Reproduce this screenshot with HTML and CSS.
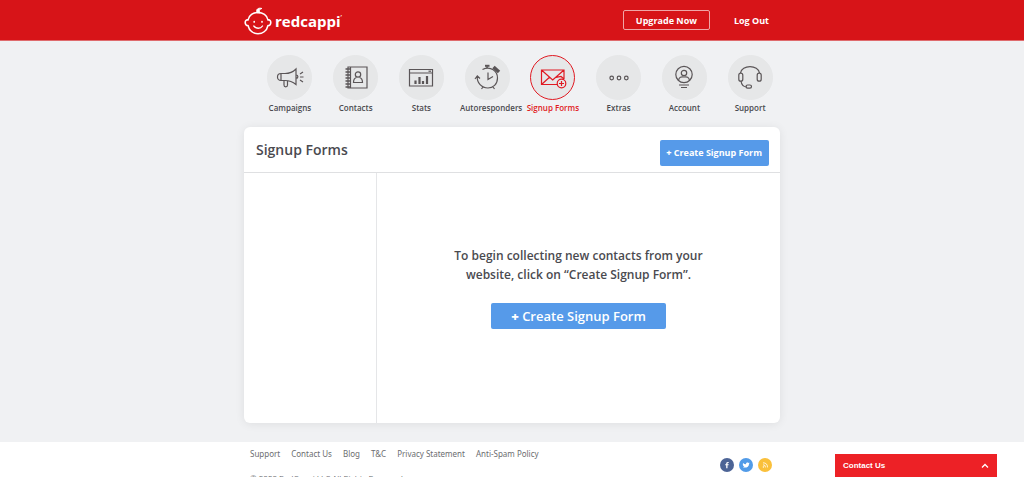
FILE: index.html
```html
<!DOCTYPE html>
<html lang="en">
<head>
<meta charset="utf-8">
<title>Signup Forms - redcappi</title>
<link rel="stylesheet" href="styles.css">
</head>
<body>
<header class="topbar">
  <div class="container topbar-inner">
    <a class="brand" href="#">
      <svg class="brand-mark" viewBox="0 0 28 28" fill="none" stroke="#fff" stroke-width="1.6" stroke-linecap="round" aria-hidden="true">
        <path d="M4 13C5.500 3 22.500 3 24 13M4 18.500C6.500 29.500 21.500 29.500 24 18.500M4 13C.3 12 .3 18.800 4 18.500M24 13C27.700 12 27.700 18.800 24 18.500"/>
        <path d="M13 5.500C11.500 2 14.500 .5 18 1.500C15.800 2 14.500 3.300 16 5.500Z" fill="#fff" stroke-width="1"/>
        <path d="M9.800 19C12 22 16.500 22 18.500 19" stroke-width="1.300"/>
        <path d="M10.200 14.700v.3M18 14.700v.3" stroke-width="1.700"/>
      </svg>
      <span class="brand-name">redcappi</span><span class="brand-tm">’</span>
    </a>
    <div class="account-links">
      <button class="upgrade" type="button">Upgrade Now</button>
      <a class="logout" href="#">Log Out</a>
    </div>
  </div>
</header>

<main class="main">
  <div class="container">
    <nav class="nav">
      <a class="nav-item" href="#">
        <span class="nav-icon"><svg viewBox="0 0 28 28"><path d="M5 9.500H9C13 9.500 17 8 20 5V20.500C17 18 13 16.500 9 16.500H5C.3 16.500.3 9.500 5 9.500ZM5 9.500V16.500M20 11C22.500 11 22.500 14.500 20 14.500M8 16.500V21C8 23.500 11.500 23.500 11.500 21V16.500M24 10L27 8M24 13H27.500M24 16L27 18"/></svg></span>
        <span>Campaigns</span>
      </a>
      <a class="nav-item" href="#">
        <span class="nav-icon"><svg viewBox="0 0 28 28"><path d="M6 3H25V24H6ZM8.500 3V24"/><path d="M3.500 5H8M3.500 8H8M3.500 11H8M3.500 14H8M3.500 17H8M3.500 20H8M3.500 23H8" stroke-width="1.400"/><circle cx="16" cy="10.500" r="2.700"/><path d="M14.500 13.500C12.500 14 11.500 15.500 11.500 18.500H20.500C20.500 15.500 19.500 14 17.500 13.500"/></svg></span>
        <span>Contacts</span>
      </a>
      <a class="nav-item" href="#">
        <span class="nav-icon"><svg viewBox="0 0 28 28"><path d="M2.500 5.500H25.500V22H2.500ZM2.500 9H25.500"/><path d="M8.500 20V16.500M12.500 20V13M16 20V17M20 20V12" stroke-width="2.200"/><path d="M21.500 7.200h2.500"/></svg></span>
        <span>Stats</span>
      </a>
      <a class="nav-item" href="#">
        <span class="nav-icon"><svg viewBox="0 0 28 28"><path d="M9.500 5.500C18 1.500 24.500 7.500 24.500 14C24.500 20.500 20 24 15 24C8.500 24 4 19 4.200 12.500M2 15L4.300 12L7 14.500M15 8.500V15.500L20 12.500M10 23L8.500 25M20 23L21.500 25M14 2V4.500"/><path d="M12 1.800H16.500" stroke-width="2"/><path d="M20.500 3L26 8" stroke-width="3.500"/></svg></span>
        <span class="nav-long">Autoresponders</span>
      </a>
      <a class="nav-item nav-active" href="#">
        <span class="nav-icon"><svg viewBox="0 0 28 28"><path d="M18.500 20.500H2.500V6H25V15M2.500 6L13.700 16L25 6M2.500 20.500L10.500 13.300M25 15L22 12.500L17 13.300"/><circle cx="22.500" cy="19.500" r="4.300"/><path d="M20 19.500H25M22.500 17V22"/></svg></span>
        <span>Signup Forms</span>
      </a>
      <a class="nav-item" href="#">
        <span class="nav-icon"><svg viewBox="0 0 28 28"><circle cx="6.700" cy="14" r="1.800"/><circle cx="14" cy="14" r="1.800"/><circle cx="21.300" cy="14" r="1.800"/></svg></span>
        <span>Extras</span>
      </a>
      <a class="nav-item" href="#">
        <span class="nav-icon"><svg viewBox="0 0 28 28"><circle cx="14" cy="10.500" r="8.200"/><circle cx="14" cy="9" r="2.700"/><path d="M8.500 16.500C9 13 11 12.500 14 13C17 12.500 19 13 19.500 16.500M9 21H19M11 23.500H17"/></svg></span>
        <span>Account</span>
      </a>
      <a class="nav-item" href="#">
        <span class="nav-icon"><svg viewBox="0 0 28 28"><path d="M4.500 9C5.500 .5 22.500 .5 23.500 9M5 17C5.500 21 7.500 23 11 23"/><rect x="2.800" y="9.200" width="4" height="8" rx="2"/><rect x="21.200" y="9.200" width="4" height="8" rx="2"/><rect x="10" y="21" width="5.500" height="3.200" rx="1.600"/></svg></span>
        <span>Support</span>
      </a>
    </nav>

    <section class="card">
      <div class="card-head">
        <h1 class="card-title">Signup Forms</h1>
        <button class="btn btn-small" type="button"><b>+</b> Create Signup Form</button>
      </div>
      <div class="card-body">
        <aside class="side"></aside>
        <div class="empty">
          <p class="empty-text">To begin collecting new contacts from your website, click on “Create Signup Form”.</p>
          <button class="btn btn-large" type="button"><b>+</b> Create Signup Form</button>
        </div>
      </div>
    </section>
  </div>
</main>

<footer class="footer">
  <div class="container footer-inner">
    <div>
      <nav class="footer-links">
        <a href="#">Support</a><a href="#">Contact Us</a><a href="#">Blog</a><a href="#">T&amp;C</a><a href="#">Privacy Statement</a><a href="#">Anti-Spam Policy</a>
      </nav>
      <p class="copyright">© 2020 RedCappi LLC All Rights Reserved.</p>
    </div>
    <div class="social">
      <a class="social-link facebook" href="#" aria-label="Facebook"><svg viewBox="0 0 14 14"><path d="M6.200 10.200V7.300H5.200V6.200H6.200C6 4.300 6.900 3.700 8.700 4V5.100C7.800 5 7.500 5.300 7.500 6.200H8.700L8.500 7.300H7.500V10.200Z" fill="#fff"/></svg></a>
      <a class="social-link twitter" href="#" aria-label="Twitter"><svg viewBox="0 0 14 14"><path d="M4 5Q5.400 6.200 7 6.200C6.800 4.500 8.700 4 9.600 4.900L10.600 4.700L10.100 5.700C10 9 6.800 10.300 3.800 9.200Q4.900 9.100 5.400 8.700Q4.400 8.400 4.100 7.500Q3.600 6.500 4 5Z" fill="#fff"/></svg></a>
      <a class="social-link rss" href="#" aria-label="RSS"><svg viewBox="0 0 14 14" fill="none" stroke="#fff" stroke-width=".8"><circle cx="5.300" cy="9" r=".4"/><path d="M5 6.800Q7.500 6.800 7.500 9.400M5 4.800Q9.500 4.800 9.500 9.400"/></svg></a>
    </div>
  </div>
</footer>

<button class="chat" type="button">
  <span>Contact Us</span>
  <svg class="chat-arrow" viewBox="0 0 8 6" fill="none" stroke="#fff" stroke-width="1.300"><path d="M1 4.500L4 1.500L7 4.500"/></svg>
</button>
</body>
</html>
```
FILE: styles.css
```css
* { box-sizing: border-box; }
html { height: 100%; }
body {
  margin: 0;
  height: 100%;
  overflow: hidden;
  background: #fff;
  color: #4a4a4f;
  font-family: "Open Sans", sans-serif;
}
a { color: inherit; text-decoration: none; }
button { font-family: inherit; cursor: pointer; }
.container { max-width: 536px; margin: 0 auto; }

.topbar { background: #d71418; border-bottom: 1px solid #df6b6d; color: #fff; }
.topbar-inner { display: flex; align-items: center; justify-content: space-between; height: 40px; }
.brand { display: flex; align-items: center; padding-top: 2px; }
.brand-mark { width: 28px; height: 28px; margin-right: 3px; }
.brand-name { font: 700 15px/24px "Open Sans", sans-serif; }
.brand-tm { font-size: 8px; line-height: 20px; align-self: flex-start; }
.account-links { display: flex; align-items: center; gap: 24px; padding-right: 11px; font-size: 9px; font-weight: 700; }
.upgrade { height: 20px; padding: 0 12px; border: 1px solid #f0a5a6; border-radius: 2px; background: none; color: #fff; font-size: 9px; font-weight: 700; }

.main { background: #f0f1f3; padding: 14px 0 19px; }
.nav { display: grid; grid-template-columns: repeat(8, minmax(0, 1fr)); margin: 0 -3px 12px 13px; }
.nav-item { display: flex; flex-direction: column; align-items: center; gap: 1px; font-size: 8px; font-weight: 600; line-height: 14px; white-space: nowrap; }
.nav-icon { display: flex; align-items: center; justify-content: center; width: 45px; height: 45px; border: 1px solid #e6e7e8; border-radius: 50%; background: #e6e7e8; }
.nav-icon svg { width: 28px; height: 28px; fill: none; stroke: #5a5557; stroke-width: 1.2; }
.nav-long { padding-left: 8px; }
.nav-active { color: #e01a22; }
.nav-active .nav-icon { border-color: #e01a22; }
.nav-active .nav-icon svg { stroke: #e01a22; }

.card { background: #fff; border-radius: 6px; box-shadow: 0 1px 10px rgba(0, 0, 0, 0.08); }
.card-head { display: flex; align-items: center; justify-content: space-between; height: 46px; padding: 6px 11px 0 12px; border-bottom: 1px solid #dfe0e2; }
.card-title { margin: 0 0 6px; font-size: 14px; font-weight: 600; line-height: 20px; }
.btn { border: 0; border-radius: 2px; background: #569ae9; color: #fff; white-space: nowrap; }
.btn b { font-weight: 800; }
.btn-small { height: 26px; padding: 0 7px 0 6px; font-size: 9px; font-weight: 700; }
.btn-large { height: 26px; padding: 0 20px; font-size: 13px; font-weight: 600; }
.card-body { display: grid; grid-template-columns: 133px 1fr; min-height: 250px; }
.side { border-right: 1px solid #e5e6e8; }
.empty { display: flex; flex-direction: column; align-items: center; padding: 73px 60px; }
.empty-text { max-width: 264px; margin: 0 0 19px; font-size: 12px; font-weight: 600; line-height: 19px; text-align: center; }

.footer { color: #6c6d70; font-size: 8px; }
.footer-inner { display: flex; justify-content: space-between; padding: 5px 8px 12px 6px; }
.footer-links { display: flex; gap: 11px; font-family: "Noto Sans", sans-serif; line-height: 14px; }
.copyright { margin: 10px 0 0; line-height: 14px; }
.social { display: flex; gap: 5px; padding-top: 11px; }
.social-link { width: 14px; height: 14px; border-radius: 50%; }
.social-link svg { display: block; width: 14px; height: 14px; }
.facebook { background: #4c6496; }
.twitter { background: #519be8; }
.rss { background: #fac03b; }

.chat {
  position: fixed;
  right: 27px;
  bottom: 0;
  display: flex;
  align-items: center;
  justify-content: space-between;
  width: 162px;
  height: 23px;
  padding: 0 8px;
  border: 0;
  background: #ed2126;
  color: #fff;
  font: 700 8px "Liberation Sans", sans-serif;
}
.chat-arrow { width: 8px; height: 6px; }
```
